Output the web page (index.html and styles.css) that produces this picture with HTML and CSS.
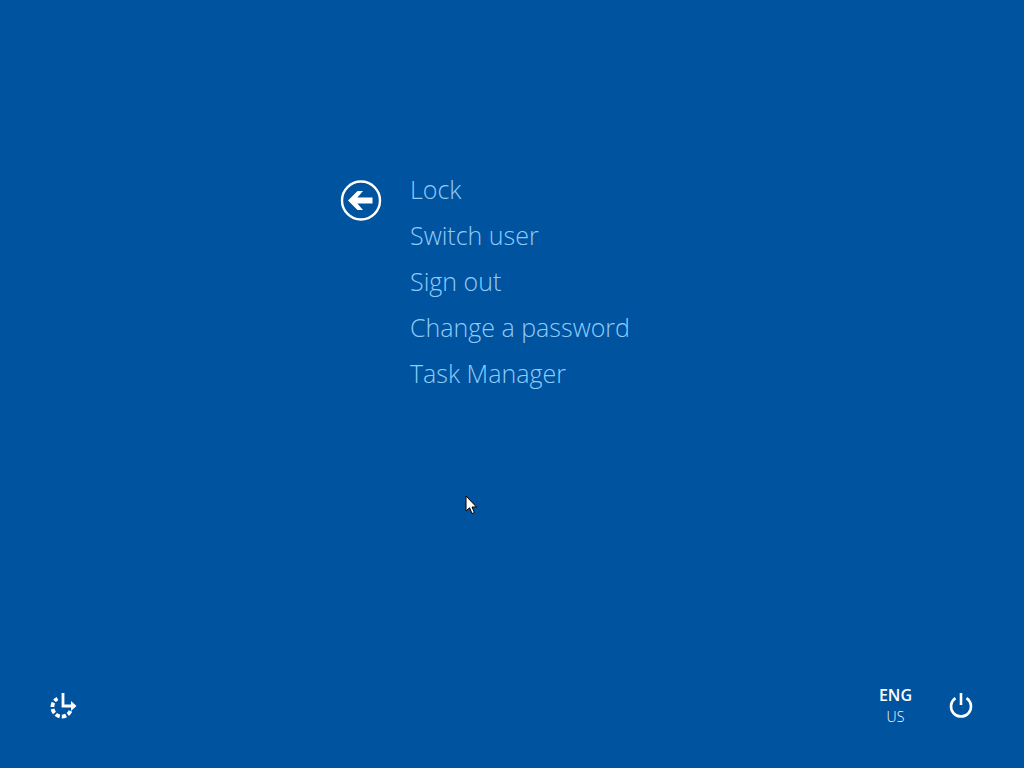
FILE: index.html
```html
<!DOCTYPE html>
<html lang="en">
<head>
<meta charset="utf-8">
<title>Security options</title>
<link rel="stylesheet" href="styles.css">
</head>
<body>
<main class="screen">
  <section class="options">
    <button class="back" aria-label="Back">
      <svg width="42" height="42" viewBox="0 0 42 42">
        <circle cx="21" cy="20.5" r="19" fill="none" stroke="#fff" stroke-width="2.4"/>
        <path d="M8 20.5 L17.5 11 H23 L17.4 17.6 H32.5 V23.4 H17.4 L23 30 H17.5 Z" fill="#fff"/>
      </svg>
    </button>
    <ul class="menu">
      <li>Lock</li>
      <li>Switch user</li>
      <li>Sign out</li>
      <li>Change a password</li>
      <li>Task Manager</li>
    </ul>
  </section>
  <footer class="bottom">
    <button class="ease" aria-label="Ease of access">
      <svg width="28" height="28" viewBox="0 0 28 28">
        <path d="M20.5 19 A9.5 9.5 0 1 1 7.5 6.6" fill="none" stroke="#fff" stroke-width="3.8" stroke-dasharray="4.4 2"/>
        <path d="M13 1 V14 H23" fill="none" stroke="#fff" stroke-width="2.8"/>
        <path d="M21 9 L26.5 14 L21 19 Z" fill="#fff"/>
      </svg>
    </button>
    <div class="right">
      <div class="lang"><strong>ENG</strong><span>US</span></div>
      <button class="power" aria-label="Power">
        <svg width="26" height="28" viewBox="0 0 26 28">
          <path d="M7.5 6.2 A10 10 0 1 0 18.5 6.2" fill="none" stroke="#fff" stroke-width="2.6"/>
          <path d="M13 1 V13" fill="none" stroke="#fff" stroke-width="2.6"/>
        </svg>
      </button>
    </div>
  </footer>
  <svg class="cursor" width="14" height="20" viewBox="0 0 14 20">
    <path d="M1 1 V16 L4.6 12.8 L7 18.5 L9.4 17.5 L7 12 H11.5 Z" fill="#fff" stroke="#000" stroke-width="1"/>
  </svg>
</main>
</body>
</html>
```
FILE: styles.css
```css
* { box-sizing: border-box; }
html, body { margin: 0; height: 100%; }
body { background: #00539f; overflow: hidden; }
button { background: none; border: 0; padding: 0; display: block; line-height: 0; }
.screen {
  position: relative;
  width: 1024px;
  height: 768px;
  display: flex;
  flex-direction: column;
  justify-content: space-between;
  font-family: "Open Sans", "Liberation Sans", sans-serif;
}
.options {
  display: flex;
  align-items: flex-start;
  padding: 166px 0 0 340px;
}
.back { margin-top: 14px; width: 42px; }
.menu {
  list-style: none;
  margin: 0 0 0 28px;
  padding: 0;
  color: #8fcbfb;
  font-size: 25px;
  font-weight: 300;
  line-height: 46px;
}
.bottom {
  display: flex;
  justify-content: space-between;
  align-items: center;
  padding: 0 50px 41px 50px;
}
.right { display: flex; align-items: center; gap: 36px; }
.lang {
  display: flex;
  flex-direction: column;
  align-items: center;
  color: #fff;
  font-size: 16px;
  line-height: 21px;
}
.lang strong { font-weight: 600; }
.lang span { font-size: 14px; font-weight: 300; color: #fff; }
.cursor { position: absolute; left: 465px; top: 495px; }
```
